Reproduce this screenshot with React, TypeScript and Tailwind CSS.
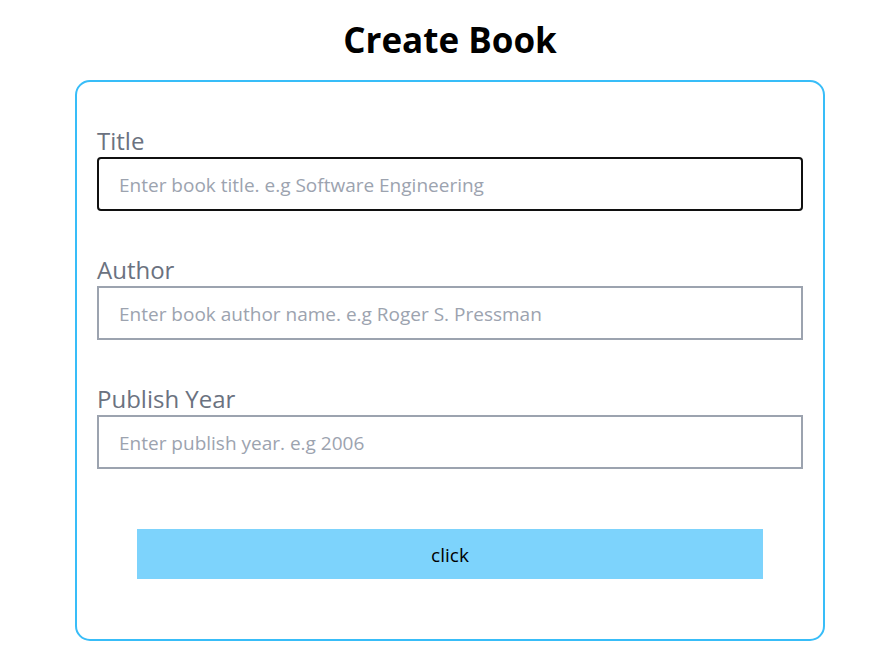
import type { InputHTMLAttributes } from "react";
import clsx from "clsx";

type FieldProps = InputHTMLAttributes<HTMLInputElement> & {
  id: string;
  label: string;
  active?: boolean;
};

function Field({ id, label, active = false, ...input }: FieldProps) {
  return (
    <div className="mt-10 flex flex-col">
      <label htmlFor={id} className="pt-0.5 text-[24px] leading-[33px] text-[#6b7280]">
        {label}
      </label>
      <input
        id={id}
        className={clsx(
          "h-[54px] w-full border-2 bg-white px-5 pt-0.5 text-[19px] text-black outline-none placeholder:text-[#9ca3af]",
          active ? "rounded border-[#101010]" : "border-[#9ca3af]",
        )}
        {...input}
      />
    </div>
  );
}

export default function App() {
  return (
    <main className="min-h-screen bg-white pl-[30px] font-['Open_Sans','Noto_Sans',sans-serif]">
      <h1 className="py-4 text-center text-[35px] leading-[48px] font-bold text-black">Create Book</h1>
      <form
        className="mx-auto flex max-w-[750px] flex-col rounded-[15px] border-2 border-[#38bdf8] px-5"
        onSubmit={(event) => event.preventDefault()}
      >
        <Field id="title" label="Title" type="text" placeholder="Enter book title. e.g Software Engineering" active />
        <Field id="author" label="Author" type="text" placeholder="Enter book author name. e.g Roger S. Pressman" />
        <Field id="year" label="Publish Year" type="text" placeholder="Enter publish year. e.g 2006" />
        <button type="submit" className="mx-10 my-15 h-[50px] bg-[#7dd3fc] pt-0.5 text-[19px] text-black">
          click
        </button>
      </form>
    </main>
  );
}
